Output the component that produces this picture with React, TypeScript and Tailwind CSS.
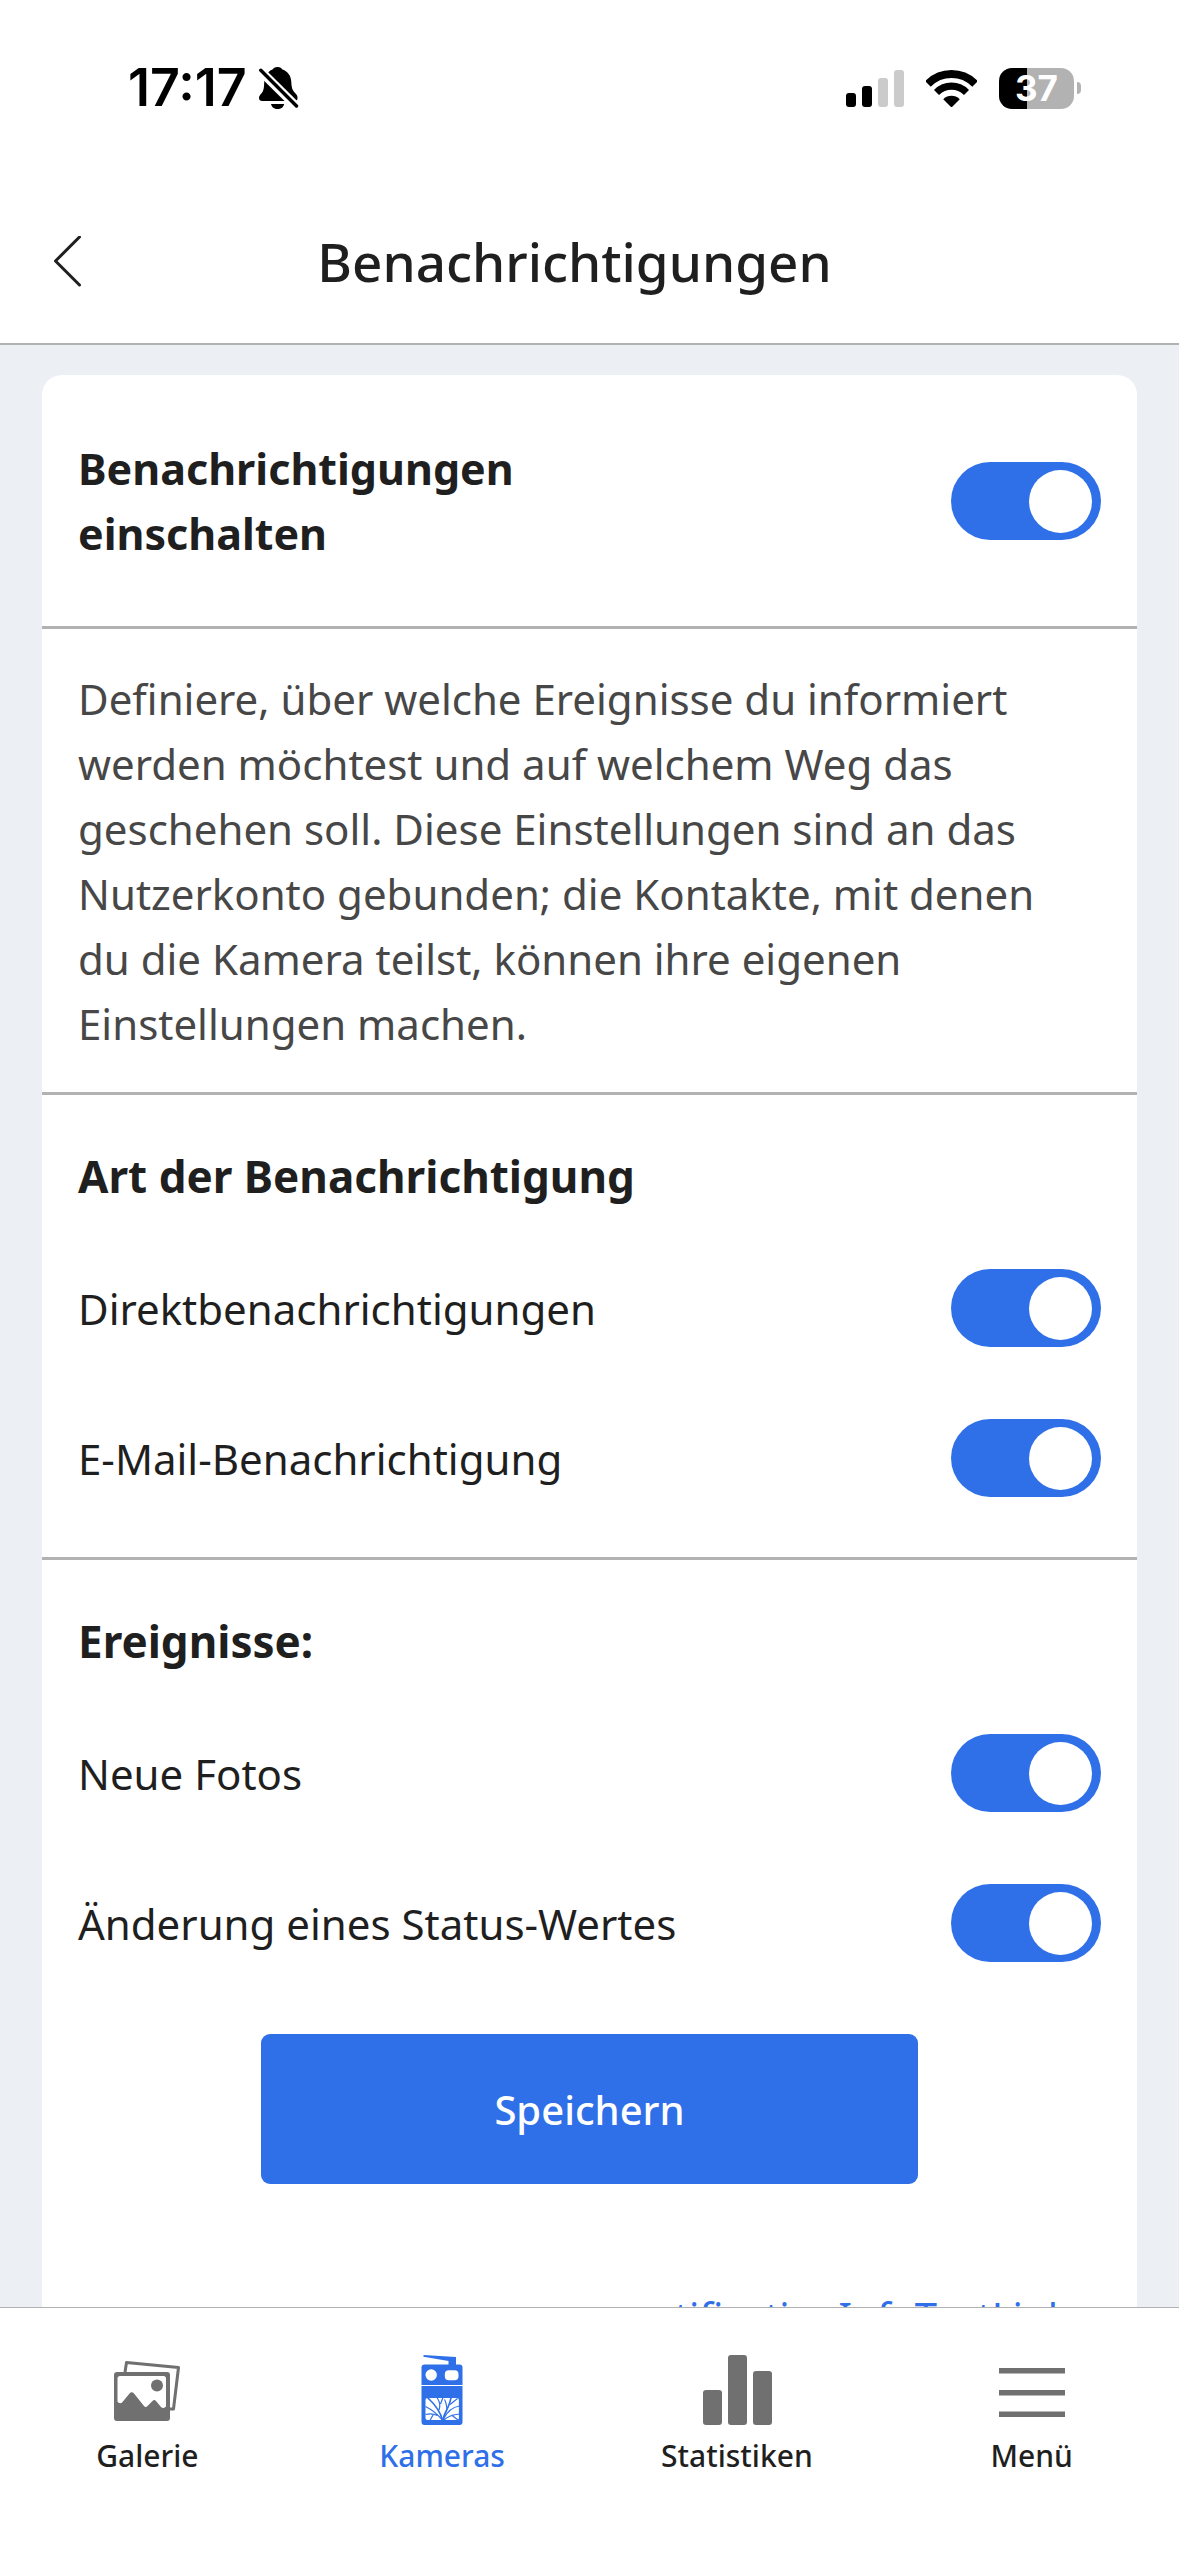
import { useState } from 'react'

function BellOffIcon() {
  return (
    <svg width="40" height="42" viewBox="0 0 40 42" aria-hidden="true">
      <path
        d="M18.500 0c2.600 0 4.300 1.300 5 2.600C29 4.600 32 9 32.300 15c.3 6 1 8 4 11.200C38.500 28.500 38.800 30 38.400 32c-.3 1.400-1.400 2-3 2H3.200C1.200 34 0 32.800 0 31c0-2 1.200-3.200 2.600-4.700C4.800 23.800 5 20.500 5.200 15.500 5.500 9 8.500 4.600 13.500 2.600 14.200 1.300 15.900 0 18.500 0z"
        fill="#000"
      />
      <path d="M12 37h13.200c-.6 3-3.200 5-6.600 5s-6-2-6.600-5z" fill="#000" />
      <path d="M-1 1.500 40 42" stroke="#fff" strokeWidth="9" />
      <path d="M1.800 3.300 37.500 39" stroke="#000" strokeWidth="3.400" strokeLinecap="round" />
    </svg>
  )
}

function SignalIcon() {
  return (
    <svg width="58" height="37" viewBox="0 0 58 37" aria-hidden="true">
      <rect x="0" y="23" width="10" height="14" rx="3" fill="#000" />
      <rect x="16" y="16" width="10" height="21" rx="3" fill="#000" />
      <rect x="32" y="8" width="10" height="29" rx="3" fill="#cbcbcb" />
      <rect x="48" y="0" width="10" height="37" rx="3" fill="#cbcbcb" />
    </svg>
  )
}

function WifiIcon() {
  return (
    <svg width="51" height="37" viewBox="0 0 51 37" aria-hidden="true">
      <clipPath id="wifi-wedge">
        <path d="M25.500 37.500-12 0h75z" />
      </clipPath>
      <g clipPath="url(#wifi-wedge)">
        <circle cx="25.500" cy="37" r="33" fill="none" stroke="#000" strokeWidth="8" />
        <circle cx="25.500" cy="37" r="20.800" fill="none" stroke="#000" strokeWidth="7.200" />
        <circle cx="25.500" cy="37" r="11.300" fill="#000" />
      </g>
    </svg>
  )
}

function GalleryIcon() {
  return (
    <svg width="72" height="72" viewBox="0 0 72 72" aria-hidden="true">
      <path d="M14 18 15.500 8.500 67.500 13.500 62.500 55h-5" fill="none" stroke="#707070" strokeWidth="3" strokeLinejoin="round" />
      <path
        fillRule="evenodd"
        fill="#707070"
        d="M6 18h50a3 3 0 0 1 3 3v43a3 3 0 0 1-3 3H6a3 3 0 0 1-3-3V21a3 3 0 0 1 3-3zM9 22a2.500 2.500 0 0 0-2.500 2.500V47.500c1 2 3.500 2.300 5 .5L18.500 39.500c1.500-1.600 3-1.600 4.500 0L33 52c1 1.200 2.500 1.200 3.500 0l5-5c1.200-1.200 2.400-1.200 3.500 0l5 6c1.500 1.500 4 1 5-.5V24.500A2.500 2.500 0 0 0 52.500 22z"
      />
      <circle cx="46" cy="31.500" r="6" fill="#707070" />
    </svg>
  )
}

function CameraIcon() {
  return (
    <svg width="72" height="72" viewBox="-15.500 -1 72 72" aria-hidden="true">
      <g fill="#2f70e8">
        <path d="M2 0 34.500 2v8H27V6L2 1.800z" />
        <path
          fillRule="evenodd"
          d="M3 9.500h35a3 3 0 0 1 3 3V30H0V12.500a3 3 0 0 1 3-3zM9.700 14.300a5.700 5.700 0 1 0 0 11.400 5.700 5.700 0 0 0 0-11.400zM27.300 15.300a4 4 0 0 0-4 4v2a4 4 0 0 0 4 4H33a4 4 0 0 0 4-4v-2a4 4 0 0 0-4-4z"
        />
        <path d="M0 31h41v36a3 3 0 0 1-3 3H3a3 3 0 0 1-3-3z" />
      </g>
      <rect x="4" y="43" width="33.400" height="22" rx="2" fill="#fff" />
      <g fill="none" stroke="#2f70e8" strokeWidth="1.200">
        <path d="M21 65.500C19 56 13 49 6 42.500" strokeWidth="1.700" />
        <path d="M17.500 55C19 51 18.500 47 15.500 42.500M19 49 21.500 42.500" />
        <path d="M21 65C15 58 9 54 4 51.500M16 60.500C12 58.500 8 58.500 4 59.500M12 59 8.500 65.500" />
        <path d="M21.500 65.500C22 58 28 53 29.500 42.500" strokeWidth="1.700" />
        <path d="M25.500 54C25 50 24.500 47 23 44.500M28.500 49.500 36 43.500" />
        <path d="M22 64C26 56 31 52 38 51M22 65.500C27 60.500 32 59.500 38 59M30 60 36.500 65" />
      </g>
    </svg>
  )
}

function StatsIcon() {
  return (
    <svg width="72" height="72" viewBox="0 0 72 72" fill="#707070" aria-hidden="true">
      <rect x="2" y="36" width="19" height="35" rx="3" />
      <rect x="27" y="1" width="19" height="70" rx="3" />
      <rect x="52" y="17" width="19" height="54" rx="3" />
    </svg>
  )
}

function MenuIcon() {
  return (
    <svg width="72" height="72" viewBox="0 0 72 72" fill="#707070" aria-hidden="true">
      <rect x="3" y="14" width="66" height="5.500" />
      <rect x="3" y="36" width="66" height="5.500" />
      <rect x="3" y="57.500" width="66" height="5.500" />
    </svg>
  )
}

const tabs = [
  { label: 'Galerie', Icon: GalleryIcon, active: false },
  { label: 'Kameras', Icon: CameraIcon, active: true },
  { label: 'Statistiken', Icon: StatsIcon, active: false },
  { label: 'Menü', Icon: MenuIcon, active: false },
]

function StatusBar() {
  return (
    <div className="flex h-[176px] shrink-0 items-center justify-between pr-[98px] pl-32 font-['Inter',sans-serif]">
      <div className="flex items-center gap-3">
        <span className="text-[52px] leading-[52px] font-semibold text-black">17:17</span>
        <BellOffIcon />
      </div>
      <div className="flex items-center">
        <SignalIcon />
        <div className="ml-[22px]">
          <WifiIcon />
        </div>
        <div className="ml-[22px] flex h-[41px] w-[75px] items-center justify-center rounded-[13px] bg-linear-to-r from-black from-[37%] to-[#b2b2b2] to-[37%] text-[35px] leading-[41px] font-bold text-white">
          37
        </div>
        <div className="ml-[3px] h-3 w-1 rounded-r-full bg-[#b2b2b2]" />
      </div>
    </div>
  )
}

type ToggleRowProps = {
  id: string
  label: string
  heading?: boolean
}

function ToggleRow({ id, label, heading = false }: ToggleRowProps) {
  const [on, setOn] = useState(true)

  return (
    <div className={`flex items-center justify-between gap-4 ${heading ? 'pt-[61px] pb-[60px]' : 'h-[150px]'}`}>
      <label
        htmlFor={id}
        className={heading ? 'max-w-[560px] text-[43px] leading-[65px] font-bold' : 'text-[42px] leading-[65px]'}
      >
        {label}
      </label>
      <input
        id={id}
        type="checkbox"
        role="switch"
        checked={on}
        onChange={(e) => setOn(e.target.checked)}
        className="flex h-[78px] w-[150px] shrink-0 cursor-pointer appearance-none items-center rounded-full bg-[#b2b2b2] px-[9px] before:size-[63px] before:rounded-full before:bg-white checked:justify-end checked:bg-[#2f70e8]"
      />
    </div>
  )
}

export default function App() {
  return (
    <div className="flex h-screen flex-col overflow-hidden bg-white font-['Noto_Sans',sans-serif] text-[#1f1f1f]">
      <StatusBar />

      <header className="flex h-[169px] shrink-0 items-center border-b-2 border-[#b2b2b2] pt-1">
        <button type="button" aria-label="Zurück" className="flex w-[120px] cursor-pointer pl-[53px]">
          <svg width="29" height="52" viewBox="0 0 29 52" fill="none" aria-hidden="true">
            <path d="M26.500 1 2.500 25l24 24" stroke="#1f1f1f" strokeWidth="3" strokeLinecap="round" strokeLinejoin="round" />
          </svg>
        </button>
        <h1 className="flex-1 text-center text-[53px] leading-[75px] font-medium">Benachrichtigungen</h1>
        <div className="w-[150px]" />
      </header>

      <main className="min-h-0 flex-1 overflow-y-auto bg-[#eceff4] px-[42px] pt-[30px] [scrollbar-width:none]">
        <div className="divide-y-3 divide-[#b2b2b2] rounded-t-[20px] bg-white">
          <section className="px-9">
            <ToggleRow id="all" label="Benachrichtigungen einschalten" heading />
          </section>

          <section className="pt-[37px] pr-14 pb-9 pl-9">
            <p className="text-[42px] leading-[65px] text-[#474747]">
              Definiere, über welche Ereignisse du informiert werden möchtest und auf welchem Weg das geschehen
              soll. Diese Einstellungen sind an das Nutzerkonto gebunden; die Kontakte, mit denen du die Kamera
              teilst, können ihre eigenen Einstellungen machen.
            </p>
          </section>

          <section className="px-9 pt-[49px] pb-6">
            <h2 className="mb-6 text-[44px] leading-[65px] font-bold">Art der Benachrichtigung</h2>
            <ToggleRow id="push" label="Direktbenachrichtigungen" />
            <ToggleRow id="email" label="E-Mail-Benachrichtigung" />
          </section>

          <section className="px-9 pt-[49px] pb-10">
            <h2 className="mb-6 text-[44px] leading-[65px] font-bold">Ereignisse:</h2>
            <ToggleRow id="photos" label="Neue Fotos" />
            <ToggleRow id="status" label="Änderung eines Status-Wertes" />
            <div className="mt-9 flex justify-center">
              <button
                type="button"
                className="h-[150px] w-[657px] cursor-pointer rounded-[9px] bg-[#2f70e8] text-[40px] leading-[65px] font-medium text-white"
              >
                Speichern
              </button>
            </div>
            <div className="mt-[100px] flex justify-end pr-8">
              <a href="#info" className="text-[40px] leading-[65px] text-[#2f70e8]">
                notificationInfoTextLink
              </a>
            </div>
          </section>
        </div>
      </main>

      <nav className="grid h-[249px] shrink-0 grid-cols-4 border-t border-[#b2b2b2] bg-white pt-[46px]">
        {tabs.map(({ label, Icon, active }) => (
          <a
            key={label}
            href="#"
            aria-current={active ? 'page' : undefined}
            className={`flex flex-col items-center gap-[9px] text-[30px] leading-[42px] font-medium ${
              active ? 'text-[#2f70e8]' : 'text-[#1f1f1f]'
            }`}
          >
            <Icon />
            {label}
          </a>
        ))}
      </nav>
    </div>
  )
}
